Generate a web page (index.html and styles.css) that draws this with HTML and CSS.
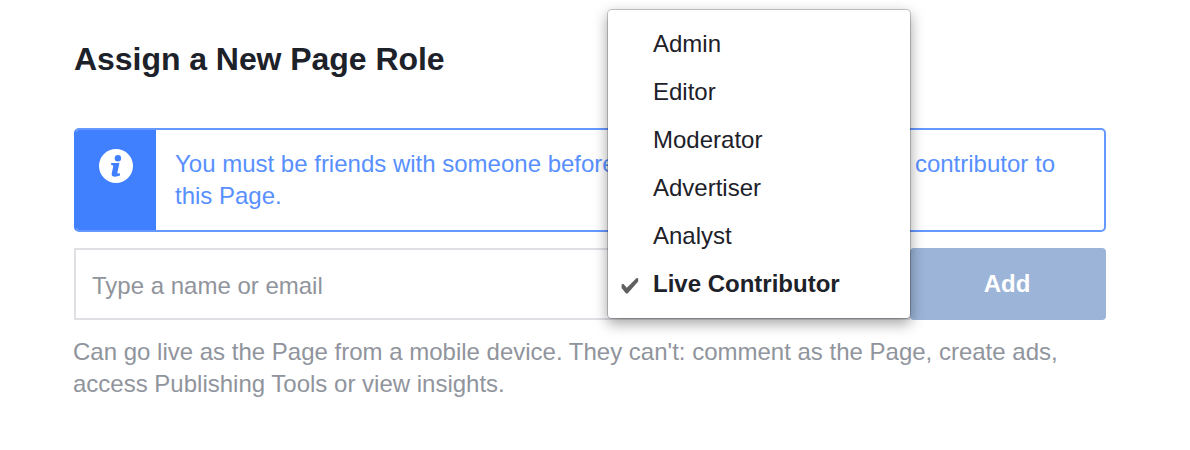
FILE: index.html
```
<!DOCTYPE html>
<html>
<head>
  <meta charset="UTF-8">
  <title>Page Roles</title>
  <link rel="stylesheet" href="styles.css">
</head>
<body>
  <div class="page-roles">
    <h1 class="title">Assign a New Page Role</h1>

    <div class="notice">
      <div class="notice-icon">
        <svg width="34" height="34" viewBox="0 0 34 34">
          <circle cx="17" cy="17" r="17" fill="#fff"/>
          <circle cx="18.9" cy="9.2" r="3.2" fill="#4080ff"/>
          <path d="M12.2 14h8.2l-2 9.6c-.2 1 .6 1.2 2.6.6v2c-3.6 2.2-9.2 2.2-8.3-1.8l1.5-7c.2-.9-.2-1.2-2-1.4z" fill="#4080ff"/>
        </svg>
      </div>
      <div class="notice-text">
        <div class="notice-line">
          <span>You must be friends with someone before</span>
          <span>contributor to</span>
        </div>
        <div>this Page.</div>
      </div>
    </div>

    <div class="role-form">
      <div class="name-input"><span class="placeholder">Type a name or email</span></div>
      <button class="add-btn">Add</button>

      <ul class="role-menu">
        <li>Admin</li>
        <li>Editor</li>
        <li>Moderator</li>
        <li>Advertiser</li>
        <li>Analyst</li>
        <li class="selected">
          <svg class="check" width="18" height="18" viewBox="0 0 18 18">
            <path d="M0.6 7.6l1.6-.8 3.6 4L15.6 1l1.6.2v3.4L6.6 16.6H5L0.6 11z" fill="#606060"/>
          </svg>
          Live Contributor
        </li>
      </ul>
    </div>

    <p class="description">
      <span>Can go live as the Page from a mobile device. They can't: comment as the Page, create ads,</span>
      <span>access Publishing Tools or view insights.</span>
    </p>
  </div>
</body>
</html>
```

FILE: styles.css
```
* {
  margin: 0;
  padding: 0;
  box-sizing: border-box;
}

body {
  font-family: "Liberation Sans", Arial, Helvetica, sans-serif;
  background: #fff;
  color: #1d2129;
  font-size: 24px;
  line-height: 32px;
  overflow: hidden;
}

.page-roles {
  width: 1032px;
  margin-left: 74px;
  padding-top: 39px;
}

.title {
  font-size: 32px;
  line-height: 40px;
  font-weight: bold;
  letter-spacing: -0.05px;
  margin-bottom: 49px;
}

.notice {
  display: flex;
  height: 104px;
  border: 2px solid #6699ff;
  border-left-color: #4080ff;
  border-radius: 5px;
  overflow: hidden;
  margin-bottom: 16px;
}

.notice-icon {
  width: 80px;
  padding: 19px 0 0 23px;
  background: #4080ff;
  flex-shrink: 0;
}

.notice-icon svg {
  display: block;
}

.notice-text {
  flex: 1;
  padding: 18px 49px 0 19px;
  color: #5890ff;
  white-space: nowrap;
}

.notice-line {
  display: flex;
  justify-content: space-between;
}

.description span {
  display: block;
}

.role-form {
  display: flex;
  position: relative;
  height: 72px;
  margin-bottom: 16px;
}

.name-input {
  flex: 1;
  border: 2px solid #dfe0e4;
  padding: 20px 16px;
  color: #90949c;
}

.add-btn {
  width: 196px;
  padding-right: 2px;
  border: none;
  border-radius: 4px;
  background: #9cb4d8;
  color: #fff;
  font: bold 24px "Liberation Sans", Arial, sans-serif;
}

.role-menu {
  position: absolute;
  left: 533px;
  top: -239px;
  width: 304px;
  height: 310px;
  padding: 10px 0 8px;
  list-style: none;
  background: #fff;
  border: 1px solid rgba(0, 0, 0, 0.2);
  border-radius: 5px;
  background-clip: padding-box;
  box-shadow: 0 5px 14px rgba(0, 0, 0, 0.35);
}

.role-menu li {
  position: relative;
  height: 48px;
  line-height: 48px;
  padding-left: 45px;
  white-space: nowrap;
}

.role-menu .selected {
  font-weight: bold;
}

.check {
  position: absolute;
  left: 13px;
  top: 17px;
}

.description {
  margin-left: -1px;
  color: #90949c;
  white-space: nowrap;
}
```
